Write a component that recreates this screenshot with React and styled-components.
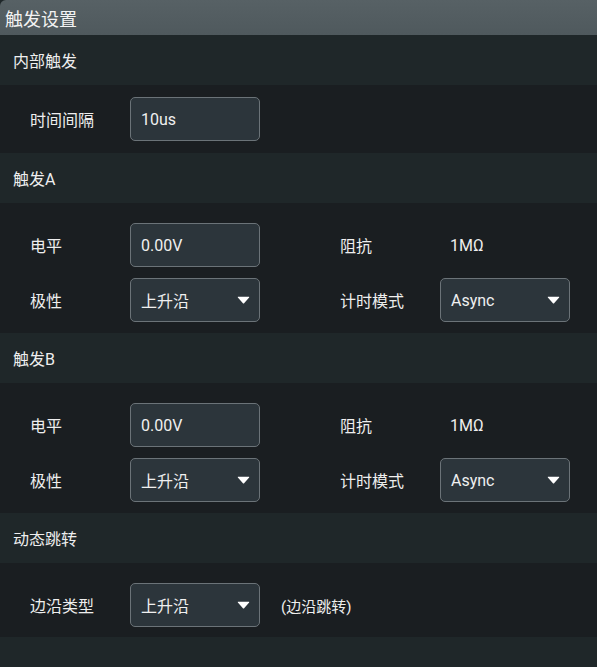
import React from "react";
import styled, { createGlobalStyle } from "styled-components";

const Global = createGlobalStyle`
  html, body { margin: 0; padding: 0; background: #1f2729; }
  body { font-family: Roboto, "Noto Sans", "Noto Sans CJK SC", sans-serif; }
  * { box-sizing: border-box; }
`;

const Panel = styled.div`
  width: 597px;
  height: 667px;
  background: #1f2729;
  color: #eeeeee;
  display: flex;
  flex-direction: column;
  overflow: hidden;
  border-top-left-radius: 6px;
`;

const TitleBar = styled.div`
  height: 35px;
  flex: none;
  background: linear-gradient(#576165, #4f595d);
  display: flex;
  align-items: center;
  padding-left: 5px;
  font-size: 18px;
  color: #f2f2f2;
  font-family: "Noto Sans CJK SC", sans-serif;
`;

const SectionHeader = styled.div`
  height: 50px;
  flex: none;
  background: #1f2729;
  display: flex;
  align-items: center;
  padding-left: 13px;
  font-size: 16px;
  font-family: Roboto, "Noto Sans CJK SC", sans-serif;
`;

const Content = styled.div`
  background: #1a1e21;
  padding: ${(p) => p.$pt}px 0 ${(p) => p.$pb}px 30px;
  display: flex;
  flex-direction: column;
  gap: 11px;
`;

const Row = styled.div`
  display: grid;
  grid-template-columns: 100px 130px 80px 100px 130px;
  align-items: center;
  height: 44px;
`;

const Label = styled.span`
  font-size: 16px;
  font-family: "Noto Sans CJK SC", sans-serif;
  color: #eeeeee;
`;

const Field = styled.div`
  height: 44px;
  border: 1px solid #6b7378;
  border-radius: 5px;
  background: #2c353b;
  display: flex;
  align-items: center;
  justify-content: space-between;
  padding: 0 9px 0 10px;
  font-size: 16px;
  font-family: Roboto, "Noto Sans CJK SC", sans-serif;
  color: #f0f0f0;
`;

const Value = styled.span`
  padding-left: 10px;
  font-size: 16px;
  font-family: Roboto, "Noto Sans CJK SC", sans-serif;
`;

const Note = styled.span`
  padding-left: 21px;
  font-size: 15px;
  font-family: Roboto, "Noto Sans CJK SC", sans-serif;
  white-space: nowrap;
  grid-column: 3 / span 2;
`;

const Arrow = () => (
  <svg width="13" height="8" viewBox="0 0 13 8">
    <path d="M1 0.8 L12 0.8 Q12.6 0.8 12.1 1.4 L7.1 7.2 Q6.5 7.8 5.9 7.2 L0.9 1.4 Q0.4 0.8 1 0.8 Z" fill="#ffffff" />
  </svg>
);

const Select = ({ value }) => (
  <Field>
    <span>{value}</span>
    <Arrow />
  </Field>
);

const Gap = styled.span``;

const TriggerSection = ({ title }) => (
  <>
    <SectionHeader>{title}</SectionHeader>
    <Content $pt={20} $pb={11}>
      <Row>
        <Label>电平</Label>
        <Field>0.00V</Field>
        <Gap />
        <Label>阻抗</Label>
        <Value>1MΩ</Value>
      </Row>
      <Row>
        <Label>极性</Label>
        <Select value="上升沿" />
        <Gap />
        <Label>计时模式</Label>
        <Select value="Async" />
      </Row>
    </Content>
  </>
);

export default function App() {
  return (
    <>
      <Global />
      <Panel>
        <TitleBar>触发设置</TitleBar>
        <SectionHeader>内部触发</SectionHeader>
        <Content $pt={12} $pb={12}>
          <Row>
            <Label>时间间隔</Label>
            <Field>10us</Field>
          </Row>
        </Content>
        <TriggerSection title="触发A" />
        <TriggerSection title="触发B" />
        <SectionHeader>动态跳转</SectionHeader>
        <Content $pt={20} $pb={10}>
          <Row>
            <Label>边沿类型</Label>
            <Select value="上升沿" />
            <Note>(边沿跳转)</Note>
          </Row>
        </Content>
      </Panel>
    </>
  );
}
